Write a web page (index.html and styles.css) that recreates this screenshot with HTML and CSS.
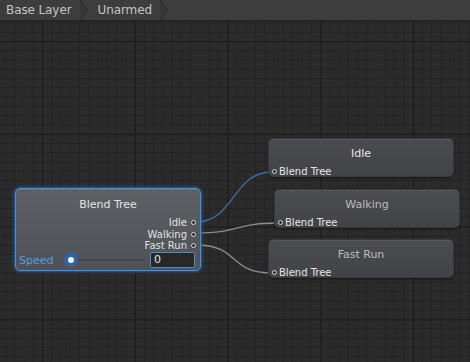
FILE: index.html
```html
<!DOCTYPE html>
<html>
<head>
<meta charset="utf-8">
<link rel="stylesheet" href="styles.css">
</head>
<body>
<div class="app">
  <div class="toolbar">
    <span class="crumb">Base Layer</span>
    <svg class="chev" width="12" height="20" viewBox="0 0 12 20"><path d="M0 0 L8 10 L0 20" fill="#363636" stroke="#2b2b2b" stroke-width="1"/></svg>
    <span class="crumb">Unarmed</span>
    <svg class="chev" width="12" height="20" viewBox="0 0 12 20"><path d="M0 0 L8 10 L0 20" fill="#363636" stroke="#2b2b2b" stroke-width="1"/></svg>
  </div>
  <div class="canvas">
    <svg class="wires" width="470" height="341" viewBox="0 21 470 341">
      <path d="M196 222 C 235 222, 232 172, 272 172" fill="none" stroke="#3d6ea6" stroke-width="1.3"/>
      <path d="M196 233 C 240 233, 235 223, 278 223" fill="none" stroke="#8c8c8c" stroke-width="1.3"/>
      <path d="M196 245 C 240 245, 228 273, 272 273" fill="none" stroke="#8c8c8c" stroke-width="1.3"/>
    </svg>

    <div class="node blend">
      <div class="title">Blend Tree</div>
      <div class="outs">
        <div class="port">Idle<span class="dot"></span></div>
        <div class="port">Walking<span class="dot"></span></div>
        <div class="port">Fast Run<span class="dot"></span></div>
      </div>
      <div class="param">
        <span class="plabel">Speed</span>
        <div class="slider"><span class="knob"></span><span class="track"></span></div>
        <div class="field">0</div>
      </div>
    </div>

    <div class="node state idle">
      <div class="title bright">Idle</div>
      <div class="in"><span class="dot"></span>Blend Tree</div>
    </div>
    <div class="node state walking">
      <div class="title">Walking</div>
      <div class="in"><span class="dot"></span>Blend Tree</div>
    </div>
    <div class="node state fastrun">
      <div class="title">Fast Run</div>
      <div class="in"><span class="dot"></span>Blend Tree</div>
    </div>
  </div>
</div>
</body>
</html>
```
FILE: styles.css
```css
html, body {
  margin: 0;
  padding: 0;
  width: 470px;
  height: 362px;
  overflow: hidden;
  background: #2b2b2b;
  font-family: "DejaVu Sans", sans-serif;
}
.app {
  display: flex;
  flex-direction: column;
  width: 470px;
  height: 362px;
}
.toolbar {
  height: 20px;
  flex: none;
  background: #3d3d3d;
  border-bottom: 1px solid #1f1f1f;
  display: flex;
  align-items: center;
  padding-left: 6px;
}
.crumb {
  color: #c4c4c4;
  font-size: 12px;
  letter-spacing: -0.1px;
  line-height: 20px;
}
.chev {
  margin: 0 6px 0 8px;
}
.canvas {
  position: relative;
  flex: 1;
  background-color: #2b2b2b;
  background-image:
    linear-gradient(to right, #1b1b1b 1px, transparent 1px),
    linear-gradient(to bottom, #1b1b1b 1px, transparent 1px),
    linear-gradient(to right, #232323 1px, transparent 1px),
    linear-gradient(to bottom, #232323 1px, transparent 1px);
  background-size: 92.8px 92.8px, 92.8px 92.8px, 9.28px 9.28px, 9.28px 9.28px;
  background-position: 42px 20px, 42px 20px, 42px 20px, 42px 20px;
}
.wires {
  position: absolute;
  left: 0;
  top: 0;
}
.node {
  position: absolute;
  box-sizing: border-box;
  border-radius: 5px;
  color: #e2e2e2;
}
.title {
  font-size: 11px;
  text-align: center;
}
.blend {
  left: 15px;
  top: 167px;
  width: 186px;
  height: 83px;
  background: linear-gradient(#5d6065, #4e5155);
  border: 1px solid #4d8fd6;
  box-shadow: 0 0 3px 1px #2a5f9a, inset 0 1px 0 #6c7075;
  padding: 9px 4px 0 4px;
  display: flex;
  flex-direction: column;
}
.outs {
  display: flex;
  flex-direction: column;
  align-items: flex-end;
  margin-top: 6px;
  font-size: 10px;
  line-height: 11.5px;
}
.port {
  display: flex;
  align-items: center;
  gap: 4px;
}
.dot {
  width: 3px;
  height: 3px;
  border-radius: 50%;
  border: 1px solid #ddd;
  background: #2a2a2a;
  display: inline-block;
}
.param {
  display: flex;
  align-items: center;
  margin-top: 0;
  height: 17px;
}
.plabel {
  color: #5b9ae0;
  font-size: 11px;
  width: 44px;
  margin-left: -1px;
}
.slider {
  position: relative;
  width: 87px;
  height: 14px;
  display: flex;
  align-items: center;
}
.knob {
  position: relative;
  z-index: 1;
  width: 6px;
  height: 6px;
  border-radius: 50%;
  background: #f2f2f2;
  border: 4px solid #2f65a7;
  margin-left: 1px;
}
.track {
  height: 2px;
  flex: 1;
  background: #454749;
  margin-right: 5px;
}
.field {
  width: 45px;
  height: 16px;
  box-sizing: border-box;
  background: #282828;
  border: 1px solid #4c8ad0;
  border-radius: 2px;
  color: #e0e0e0;
  font-size: 11px;
  line-height: 14px;
  padding-left: 3px;
}
.state {
  width: 186px;
  height: 39px;
  background: linear-gradient(#4a4c50, #414347);
  border: 1px solid #37393c;
  box-shadow: 0 1px 2px rgba(0,0,0,0.5), inset 0 1px 0 #56585c;
  padding-top: 8px;
  display: flex;
  flex-direction: column;
}
.state .title {
  font-size: 11px;
  color: #bdbdbd;
  line-height: 14px;
}
.state .title.bright {
  color: #e8e8e8;
}
.in {
  margin-top: 5px;
  display: flex;
  align-items: center;
  gap: 2px;
  font-size: 10px;
  line-height: 11px;
  color: #e6e6e6;
  margin-left: 3px;
}
.idle { left: 268px; top: 117px; }
.walking { left: 274px; top: 168px; }
.fastrun { left: 268px; top: 218px; }
```
